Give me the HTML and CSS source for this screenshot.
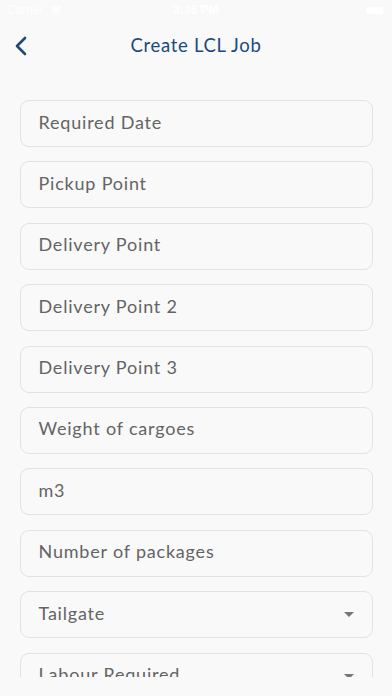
FILE: index.html
```html
<!DOCTYPE html>
<html lang="en">

<head>
    <meta charset="UTF-8">
    <meta name="viewport" content="width=device-width, initial-scale=1.0">
    <title>Create LCL Job</title>
    <link rel="stylesheet" href="styles.css">
</head>

<body>
    <div class="status-bar">
        <div class="carrier">
            Carrier
            <svg width="14" height="10" viewBox="0 0 14 10">
                <path d="M1 3.5a9 9 0 0 1 12 0M3 5.6a6 6 0 0 1 8 0M5 7.6a3 3 0 0 1 4 0" fill="none" stroke="#ffffff" stroke-width="1.6" />
            </svg>
        </div>
        <div class="time">3:36 PM</div>
        <div class="battery"></div>
    </div>

    <header class="nav-bar">
        <a class="back" href="#">
            <svg width="14" height="20" viewBox="0 0 14 20">
                <path d="M11 2L3 10l8 8" fill="none" stroke="#1b4a7e" stroke-width="2.6" stroke-linecap="round" stroke-linejoin="round" />
            </svg>
        </a>
        <h1>Create LCL Job</h1>
    </header>

    <main class="scroll">
        <form class="job-form">
            <div class="field">Required Date</div>
            <div class="field">Pickup Point</div>
            <div class="field">Delivery Point</div>
            <div class="field">Delivery Point 2</div>
            <div class="field">Delivery Point 3</div>
            <div class="field">Weight of cargoes</div>
            <div class="field">m3</div>
            <div class="field">Number of packages</div>
            <div class="field dropdown">Tailgate <span class="caret"></span></div>
            <div class="field dropdown">Labour Required <span class="caret"></span></div>
        </form>
    </main>
</body>

</html>
```

FILE: styles.css
```css
body {
    margin: 0;
    font-family: Lato, "Open Sans", sans-serif;
    background-color: #f9f9f9;
}

.status-bar {
    height: 20px;
    display: flex;
    align-items: center;
    justify-content: space-between;
    padding: 0 9px 0 7px;
    color: #ffffff;
    font-size: 12px;
    font-family: "Liberation Sans", sans-serif;
    position: relative;
}

.carrier {
    display: flex;
    align-items: center;
    gap: 5px;
}

.time {
    position: absolute;
    left: 0;
    right: 0;
    text-align: center;
    font-weight: bold;
}

.battery {
    width: 17px;
    height: 7px;
    background-color: #ffffff;
    border-radius: 2px;
}

.nav-bar {
    height: 44px;
    display: flex;
    align-items: center;
    justify-content: center;
    position: relative;
}

.back {
    position: absolute;
    left: 14px;
    top: 16px;
}

.nav-bar h1 {
    margin: 0;
    font-size: 18.5px;
    font-weight: 400;
    color: #1b4a7e;
    letter-spacing: 0.7px;
    padding-top: 6px;
}

.scroll {
    height: 613px;
    overflow: hidden;
}

.job-form {
    display: flex;
    flex-direction: column;
    gap: 14.4px;
    padding: 36px 19px 0 19.5px;
}

.field {
    height: 47px;
    box-sizing: border-box;
    border: 1px solid #e2e2e2;
    border-radius: 9px;
    padding: 0 18px 4px;
    display: flex;
    align-items: center;
    justify-content: space-between;
    font-size: 18px;
    letter-spacing: 0.8px;
    color: #646464;
    flex-shrink: 0;
}

.caret {
    width: 0;
    height: 0;
    border-left: 5px solid transparent;
    border-right: 5px solid transparent;
    border-top: 5px solid #777777;
    margin-top: 4px;
}
```
